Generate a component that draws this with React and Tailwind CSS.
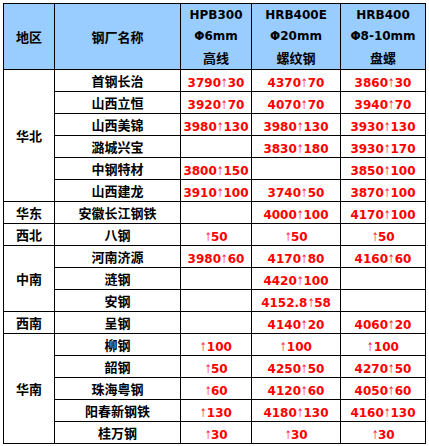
import React from 'react'

const rows = [
    { region: '华北', span: 6, name: '首钢长治', v: ['3790↑30', '4370↑70', '3860↑30'] },
    { name: '山西立恒', v: ['3920↑70', '4070↑70', '3940↑70'] },
    { name: '山西美锦', v: ['3980↑130', '3980↑130', '3930↑130'] },
    { name: '潞城兴宝', v: ['', '3830↑180', '3930↑170'] },
    { name: '中钢特材', v: ['3800↑150', '', '3850↑100'] },
    { name: '山西建龙', v: ['3910↑100', '3740↑50', '3870↑100'] },
    { region: '华东', span: 1, name: '安徽长江钢铁', v: ['', '4000↑100', '4170↑100'] },
    { region: '西北', span: 1, name: '八钢', v: ['↑50', '↑50', '↑50'] },
    { region: '中南', span: 3, name: '河南济源', v: ['3980↑60', '4170↑80', '4160↑60'] },
    { name: '涟钢', v: ['', '4420↑100', ''] },
    { name: '安钢', v: ['', '4152.8↑58', ''] },
    { region: '西南', span: 1, name: '呈钢', v: ['', '4140↑20', '4060↑20'] },
    { region: '华南', span: 5, name: '柳钢', v: ['↑100', '↑100', '↑100'] },
    { name: '韶钢', v: ['↑50', '4250↑50', '4270↑50'] },
    { name: '珠海粤钢', v: ['↑60', '4120↑60', '4050↑60'] },
    { name: '阳春新钢铁', v: ['↑130', '4180↑130', '4160↑130'] },
    { name: '桂万钢', v: ['↑30', '↑30', '↑30'] },
]

// number + thin arrow + change
function Price({ text }) {
    if (!text) return null
    const [a, b] = text.split('↑')
    return (
        <span className="font-['DejaVu_Sans',sans-serif] text-[12px] font-bold text-[#ff0000] whitespace-nowrap">
            {a}
            <span className="inline-block scale-x-[0.65] -mx-[1.7px] font-normal text-[#ff2244]">↑</span>
            {b}
        </span>
    )
}

const cjk = "font-['Noto_Sans_CJK_SC',sans-serif] text-[13px] font-bold text-black"
const latin = "font-['DejaVu_Sans','Noto_Sans_CJK_SC',sans-serif] text-[12px] font-bold text-black"

export default function App() {
    return (
        <div className="bg-white w-[429px] h-[446px] pt-[3px] pl-[3px]">
            <table className="border-collapse table-fixed w-[422px] leading-none">
                <colgroup>
                    <col className="w-[51px]" />
                    <col className="w-[126px]" />
                    <col className="w-[71px]" />
                    <col className="w-[89px]" />
                    <col className="w-[85px]" />
                </colgroup>
                <thead>
                    <tr className="h-[66px] bg-[#99ccff]">
                        <th className={`border border-black p-0 ${cjk}`}>地区</th>
                        <th className={`border border-black p-0 ${cjk}`}>钢厂名称</th>
                        <th className="border border-black p-0">
                            <div className="flex flex-col items-center leading-[21px]">
                                <span className={latin}>HPB300</span>
                                <span className={latin}>Φ6mm</span>
                                <span className={cjk}>高线</span>
                            </div>
                        </th>
                        <th className="border border-black p-0">
                            <div className="flex flex-col items-center leading-[21px]">
                                <span className={latin}>HRB400E</span>
                                <span className={latin}>Φ20mm</span>
                                <span className={cjk}>螺纹钢</span>
                            </div>
                        </th>
                        <th className="border border-black p-0">
                            <div className="flex flex-col items-center leading-[21px]">
                                <span className={latin}>HRB400</span>
                                <span className={latin}>Φ8-10mm</span>
                                <span className={cjk}>盘螺</span>
                            </div>
                        </th>
                    </tr>
                </thead>
                <tbody>
                    {rows.map((r, i) => (
                        <tr key={i} className="h-[22px]">
                            {r.region && (
                                <td rowSpan={r.span} className={`border border-black p-0 text-center ${cjk}`}>
                                    {r.region}
                                </td>
                            )}
                            <td className={`border border-black p-0 text-center ${cjk}`}>{r.name}</td>
                            {r.v.map((t, j) => (
                                <td key={j} className="border border-black p-0 text-center">
                                    <Price text={t} />
                                </td>
                            ))}
                        </tr>
                    ))}
                </tbody>
            </table>
        </div>
    )
}
